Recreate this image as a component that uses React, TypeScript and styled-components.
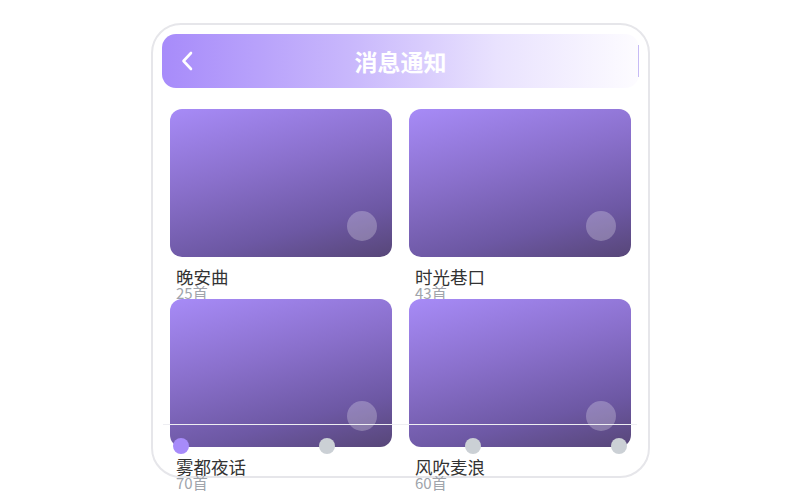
import React from "react";
import styled, { createGlobalStyle } from "styled-components";

interface Playlist {
	title: string;
	count: number;
}

const playlists: Playlist[] = [
	{ title: "晚安曲", count: 25 },
	{ title: "时光巷口", count: 43 },
	{ title: "雾都夜话", count: 70 },
	{ title: "风吹麦浪", count: 60 },
];

const GlobalStyle = createGlobalStyle`
	html, body {
		margin: 0;
		padding: 0;
		background: #fff;
		font-family: "Noto Sans CJK SC", "Noto Sans", sans-serif;
	}
	* {
		box-sizing: border-box;
	}
`;

const Page = styled.div`
	display: flex;
	justify-content: center;
	padding-top: 23px;
	padding-left: 1px;
	height: 500px;
	overflow: hidden;
`;

const Frame = styled.div`
	position: relative;
	width: 499px;
	height: 455px;
	padding: 9px;
	border: 2px solid #e6e6ea;
	border-radius: 30px;
	background: #fff;
`;

const Header = styled.div`
	position: relative;
	display: flex;
	align-items: center;
	justify-content: center;
	height: 54px;
	border-radius: 14px;
	background: linear-gradient(90deg, #a78bfa 0%, #c9b8fc 40%, #e9e2fe 70%, #fdfcff 100%);

	&::after {
		content: "";
		position: absolute;
		right: 0;
		top: 11px;
		width: 1px;
		height: 32px;
		background: #c7bbf5;
	}
`;

const BackButton = styled.button`
	position: absolute;
	left: 16px;
	top: 50%;
	transform: translateY(-50%);
	display: flex;
	align-items: center;
	justify-content: center;
	width: 18px;
	height: 24px;
	padding: 0;
	border: none;
	background: none;
	cursor: pointer;
`;

const Title = styled.h1`
	margin: 0;
	font-size: 23px;
	font-weight: 700;
	color: #fff;
`;

const Grid = styled.div`
	display: grid;
	grid-template-columns: 222px 222px;
	column-gap: 17px;
	padding: 21px 8px 0;
`;

const Item = styled.div`
	display: flex;
	flex-direction: column;
	height: 190px;
`;

const Cover = styled.div`
	position: relative;
	height: 148px;
	border-radius: 12px;
	background: linear-gradient(165deg, #a78bf7 0%, #8a70cc 40%, #6d58a4 75%, #574678 100%);
`;

const PlayDot = styled.span`
	position: absolute;
	right: 15px;
	bottom: 16px;
	width: 30px;
	height: 30px;
	border-radius: 50%;
	background: rgba(255, 255, 255, 0.25);
`;

const Name = styled.div`
	margin-top: 10px;
	padding-left: 6px;
	font-size: 17.5px;
	line-height: 19px;
	color: #333;
`;

const Count = styled.div`
	padding-left: 6px;
	font-size: 15px;
	line-height: 13px;
	color: #a0a4ab;
`;

const Track = styled.div`
	position: absolute;
	left: 10px;
	right: 11px;
	top: 399px;
	height: 1px;
	background: #eeeef2;
`;

const Steps = styled.div`
	position: absolute;
	left: 20px;
	top: 413px;
	display: flex;
	gap: 130px;
`;

const Step = styled.span<{ $active?: boolean }>`
	width: 16px;
	height: 16px;
	border-radius: 50%;
	background: ${(p) => (p.$active ? "#a78bfa" : "#cbd0d5")};
`;

const App = () => {
	return (
		<>
			<GlobalStyle />
			<Page>
				<Frame>
					<Header>
						<BackButton aria-label="返回">
							<svg width="14" height="22" viewBox="0 0 14 22" fill="none">
								<path d="M11 3 L3.5 11 L11 19" stroke="#fff" strokeWidth="2.6" strokeLinecap="round" strokeLinejoin="round" />
							</svg>
						</BackButton>
						<Title>消息通知</Title>
					</Header>
					<Grid>
						{playlists.map((p) => (
							<Item key={p.title}>
								<Cover>
									<PlayDot />
								</Cover>
								<Name>{p.title}</Name>
								<Count>{p.count}首</Count>
							</Item>
						))}
					</Grid>
					<Track />
					<Steps>
						{[0, 1, 2, 3].map((i) => (
							<Step key={i} $active={i === 0} />
						))}
					</Steps>
				</Frame>
			</Page>
		</>
	);
};

export default App;
